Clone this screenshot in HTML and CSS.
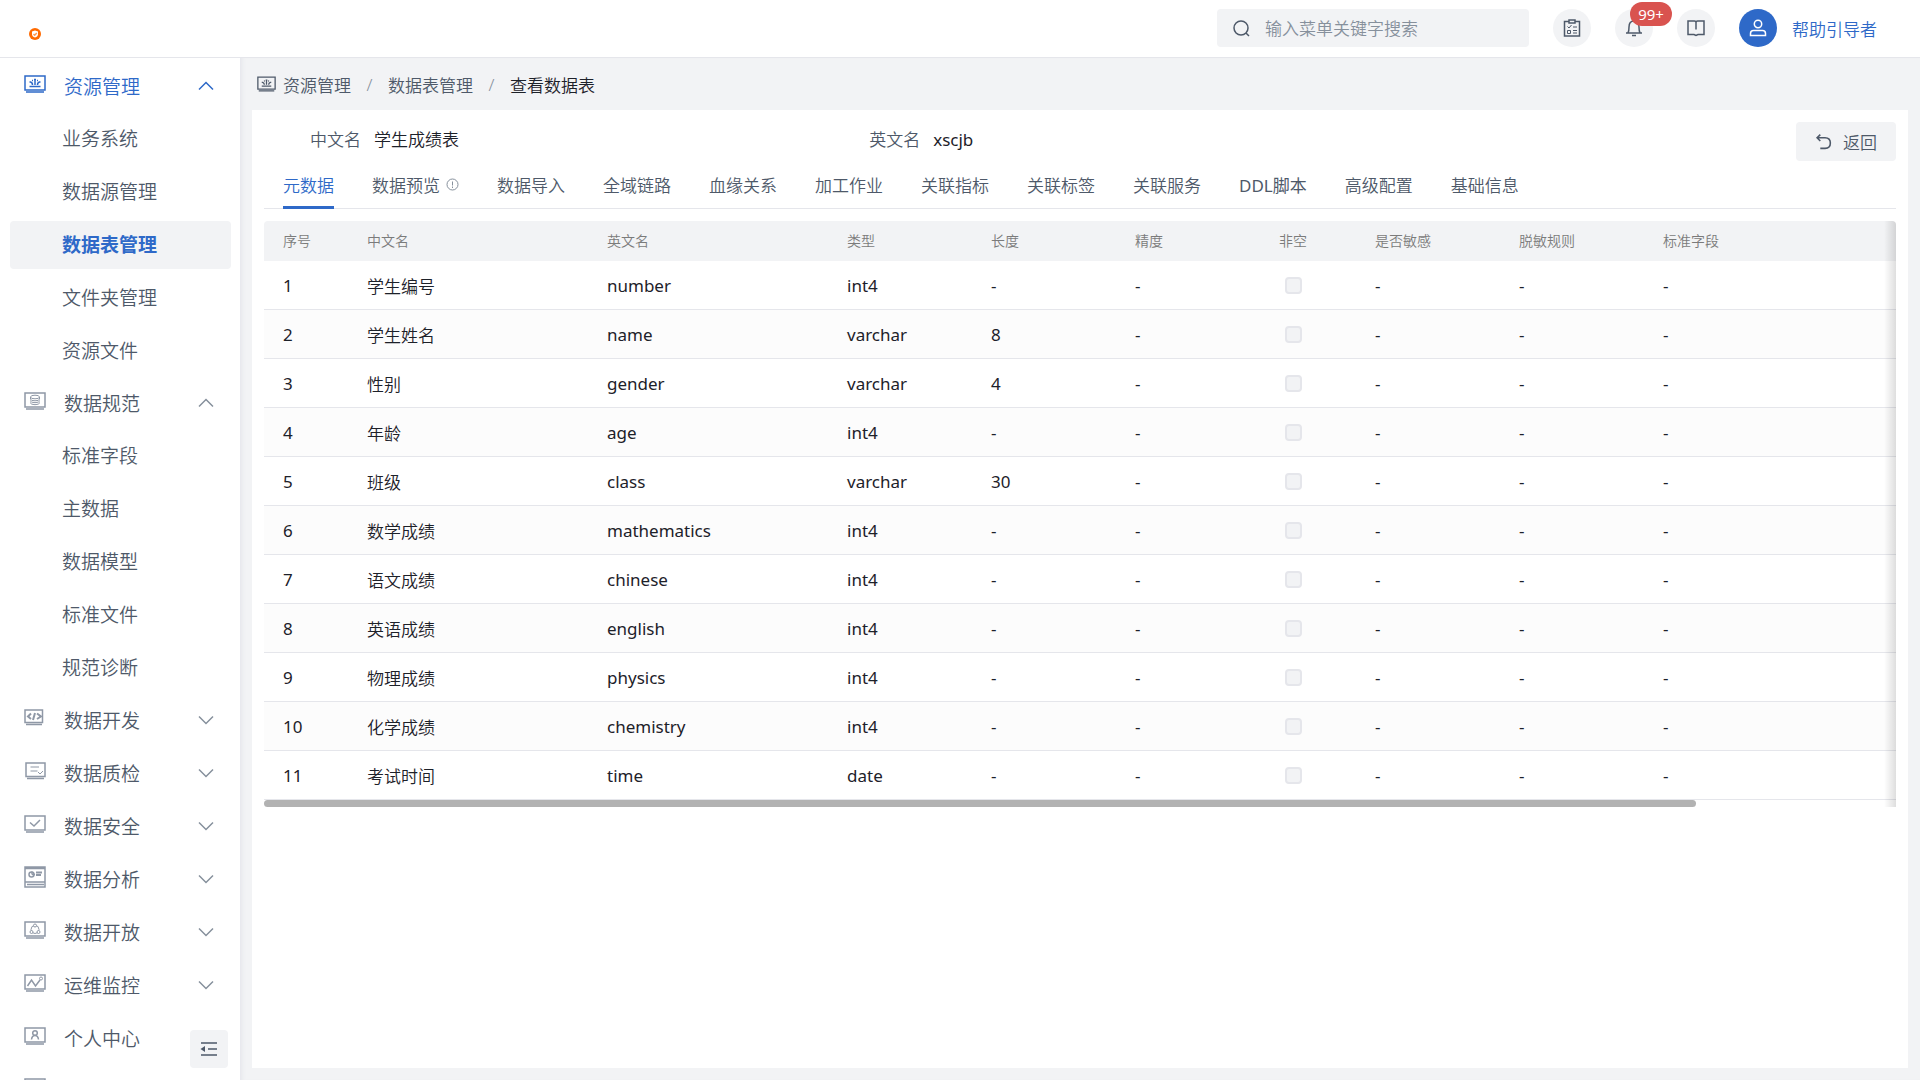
FILE: index.html
```html
<!DOCTYPE html>
<html lang="zh-CN">
<head>
    <meta charset="UTF-8">
    <title>查看数据表</title>
    <link rel="stylesheet" href="styles.css">
</head>
<body>
    <!-- shared icons -->
    <svg class="sprite" aria-hidden="true">
        <symbol id="screen" viewBox="0 0 22 18">
            <path d="M1 1h20v14H1zM2 17h18"/>
        </symbol>
        <symbol id="i-resource" viewBox="0 0 22 18">
            <path d="M1 1h20v14H1zM2 17h18"/>
            <path d="M5.500 11.500h11M11 10V4M8.500 10Q8.500 7.500 6.500 7M13.500 10Q13.500 7.500 15.500 7M10 4.500h2M5.500 7h1.500M15 7h1.500M8 5.500h1M13 5.500h1"/>
        </symbol>
        <symbol id="i-up" viewBox="0 0 16 10"><path d="M1 8.500l7-7 7 7"/></symbol>
        <symbol id="i-down" viewBox="0 0 16 10"><path d="M1 1.500l7 7 7-7"/></symbol>
    </svg>

    <header class="header">
        <svg class="logo" viewBox="0 0 12 12">
            <circle cx="6" cy="6" r="6" fill="#ff6a00"/>
            <path d="M6 2.500l3 1v2.500q0 2.500-3 3.500q-3-1-3-3.500V3.500z" fill="#fff"/>
            <path d="M4.500 6l1.200 1.200L7.800 5" fill="none" stroke="#ff9a50"/>
        </svg>
        <div class="header-right">
            <div class="search">
                <svg class="icon search-icon" viewBox="0 0 17 17"><circle cx="8" cy="8" r="7"/><path d="M13 13l3 3"/></svg>
                <input type="text" placeholder="输入菜单关键字搜索" aria-label="搜索">
            </div>
            <button class="round-btn" aria-label="任务">
                <svg class="icon" viewBox="0 0 18 18"><path d="M6 2.500H1.500v14.500h15V2.500H12M6 1h6v3H6z"/><path class="thin" d="M4.500 7.500l1.500 1.500 2.500-3M10 8h4M10 11.500h4M10 14h4M4.500 11.500h3v3h-3z"/></svg>
            </button>
            <button class="round-btn" aria-label="消息">
                <svg class="icon" viewBox="0 0 18 18"><path d="M1 14h16M3 14Q4 12 4 8q0-6 5-6t5 6q0 4 1 6M9 2V0M7 16.500h4"/></svg>
                <span class="badge">99+</span>
            </button>
            <button class="round-btn" aria-label="文档">
                <svg class="icon" viewBox="0 0 18 18"><path d="M1 2h6.500q1.500 0 1.500 1.500q0-1.500 1.500-1.500H17v13.500h-6l-2 1-2-1H1zM9 3.500v7"/></svg>
            </button>
            <a class="user" href="#">
                <span class="avatar">
                    <svg class="icon" viewBox="0 0 18 18"><circle cx="9" cy="5" r="3.700"/><path d="M1.500 16.500v-2q0-3 3-3h9q3 0 3 3v2z"/></svg>
                </span>
                帮助引导者
            </a>
        </div>
    </header>

    <div class="layout">
        <nav class="sidebar">
            <div class="group open">
                <button class="menu-title active"><svg class="menu-icon"><use href="#i-resource"/></svg>资源管理<svg class="arrow"><use href="#i-up"/></svg></button>
                <a class="menu-item" href="#">业务系统</a>
                <a class="menu-item" href="#">数据源管理</a>
                <a class="menu-item selected" href="#">数据表管理</a>
                <a class="menu-item" href="#">文件夹管理</a>
                <a class="menu-item" href="#">资源文件</a>
            </div>
            <div class="group open">
                <button class="menu-title"><svg class="menu-icon" viewBox="0 0 22 18"><use href="#screen"/><g class="thin"><ellipse cx="11" cy="5" rx="4.500" ry="1.800"/><path d="M6.500 5v2q0 1.800 4.500 1.800t4.500-1.800V5M6 8.500q1 2.200 5 2.200t5-2.200M6 10.500q1 2.200 5 2.200t5-2.200"/></g></svg>数据规范<svg class="arrow"><use href="#i-up"/></svg></button>
                <a class="menu-item" href="#">标准字段</a>
                <a class="menu-item" href="#">主数据</a>
                <a class="menu-item" href="#">数据模型</a>
                <a class="menu-item" href="#">标准文件</a>
                <a class="menu-item" href="#">规范诊断</a>
            </div>
            <div class="group">
                <button class="menu-title"><svg class="menu-icon" viewBox="0 0 22 18"><path d="M1 1h17.500v12.500H1zM2 15.500h16"/><path class="bold" d="M7 4.500L4 7.500l3 2.500M13 4.500l4 3-4 2.500M11 4l-2 7"/></svg>数据开发<svg class="arrow"><use href="#i-down"/></svg></button>
            </div>
            <div class="group">
                <button class="menu-title"><svg class="menu-icon" viewBox="0 0 22 18"><path d="M2 1h19v13.500H2zM3 16.500h17"/><path class="thin" d="M6.500 5H15M6.500 9h7M14 10l2 2 3-3"/></svg>数据质检<svg class="arrow"><use href="#i-down"/></svg></button>
            </div>
            <div class="group">
                <button class="menu-title"><svg class="menu-icon" viewBox="0 0 22 18"><use href="#screen"/><path d="M6 7.500l4 3.500 6-6"/></svg>数据安全<svg class="arrow"><use href="#i-down"/></svg></button>
            </div>
            <div class="group">
                <button class="menu-title"><svg class="menu-icon tall" viewBox="0 0 22 22"><path d="M1 1h20v20H1zM1 16h20M3 18.500h17M1 2.500h20"/><path class="bold" d="M12 6.500h6M12 9h5"/><circle cx="7.500" cy="8.500" r="2.500"/><path d="M8 8.500V5.500M8 8.500h3"/></svg>数据分析<svg class="arrow"><use href="#i-down"/></svg></button>
            </div>
            <div class="group">
                <button class="menu-title"><svg class="menu-icon" viewBox="0 0 22 18"><use href="#screen"/><g class="thin"><circle cx="11" cy="8.500" r="4"/><circle cx="11" cy="4.500" r="1.500" fill="#fff"/><circle cx="7.500" cy="11" r="1.500" fill="#fff"/><circle cx="14.500" cy="11" r="1.500" fill="#fff"/></g></svg>数据开放<svg class="arrow"><use href="#i-down"/></svg></button>
            </div>
            <div class="group">
                <button class="menu-title"><svg class="menu-icon" viewBox="0 0 22 18"><use href="#screen"/><path d="M3.500 12L7.500 6l4 6 4.500-6"/><circle class="thin" cx="17" cy="4.500" r="1.500"/></svg>运维监控<svg class="arrow"><use href="#i-down"/></svg></button>
            </div>
            <div class="group">
                <button class="menu-title"><svg class="menu-icon" viewBox="0 0 22 18"><use href="#screen"/><circle cx="11" cy="6" r="2.300"/><path d="M7.500 12.500q.5-4 3.500-4t3.500 4"/></svg>个人中心</button>
            </div>
            <div class="group">
                <button class="menu-title" aria-label="更多"><svg class="menu-icon tall" viewBox="0 0 22 22"><path d="M1 1h20v14H1z"/></svg></button>
            </div>
            <button class="collapse-btn" aria-label="收起菜单">
                <svg class="icon" viewBox="0 0 18 16"><path d="M1 2h16M8 8h9M1 14h16"/><path d="M5 5v6L.5 8z" fill="currentColor" stroke="none"/></svg>
            </button>
        </nav>

        <main class="main">
            <div class="breadcrumb">
                <svg class="crumb-icon"><use href="#i-resource"/></svg>
                <a href="#">资源管理</a>
                <span class="sep">/</span>
                <a href="#">数据表管理</a>
                <span class="sep">/</span>
                <span class="current">查看数据表</span>
            </div>

            <section class="panel">
                <div class="info">
                    <dl class="fields">
                        <div class="field"><dt>中文名</dt><dd>学生成绩表</dd></div>
                        <div class="field"><dt>英文名</dt><dd class="latin">xscjb</dd></div>
                    </dl>
                    <button class="back-btn">
                        <svg class="icon" viewBox="0 0 17 16"><path d="M5 1L2 4l3 3M2 4h7.500q5 0 5 5t-5 5H5"/></svg>
                        返回
                    </button>
                </div>

                <div class="tabs">
                    <a class="tab active" href="#">元数据</a>
                    <a class="tab" href="#">数据预览<svg class="tip" viewBox="0 0 13 13"><circle cx="6.500" cy="6.500" r="5.500"/><path d="M6.500 3.500v4M6.500 8.500v1.500"/></svg></a>
                    <a class="tab" href="#">数据导入</a>
                    <a class="tab" href="#">全域链路</a>
                    <a class="tab" href="#">血缘关系</a>
                    <a class="tab" href="#">加工作业</a>
                    <a class="tab" href="#">关联指标</a>
                    <a class="tab" href="#">关联标签</a>
                    <a class="tab" href="#">关联服务</a>
                    <a class="tab latin" href="#">DDL脚本</a>
                    <a class="tab" href="#">高级配置</a>
                    <a class="tab" href="#">基础信息</a>
                </div>

                <div class="table-wrap">
                    <table>
                        <colgroup>
                            <col class="w-no"><col class="w-name"><col class="w-name">
                            <col class="w-col"><col class="w-col"><col class="w-col">
                            <col class="w-check"><col class="w-col"><col class="w-col"><col>
                        </colgroup>
                        <thead>
                            <tr><th>序号</th><th>中文名</th><th>英文名</th><th>类型</th><th>长度</th><th>精度</th><th>非空</th><th>是否敏感</th><th>脱敏规则</th><th>标准字段</th></tr>
                        </thead>
                        <tbody>
                            <tr><td>1</td><td class="cn">学生编号</td><td>number</td><td>int4</td><td>-</td><td>-</td><td><input type="checkbox" aria-label="非空" disabled></td><td>-</td><td>-</td><td>-</td></tr>
                            <tr><td>2</td><td class="cn">学生姓名</td><td>name</td><td>varchar</td><td>8</td><td>-</td><td><input type="checkbox" aria-label="非空" disabled></td><td>-</td><td>-</td><td>-</td></tr>
                            <tr><td>3</td><td class="cn">性别</td><td>gender</td><td>varchar</td><td>4</td><td>-</td><td><input type="checkbox" aria-label="非空" disabled></td><td>-</td><td>-</td><td>-</td></tr>
                            <tr><td>4</td><td class="cn">年龄</td><td>age</td><td>int4</td><td>-</td><td>-</td><td><input type="checkbox" aria-label="非空" disabled></td><td>-</td><td>-</td><td>-</td></tr>
                            <tr><td>5</td><td class="cn">班级</td><td>class</td><td>varchar</td><td>30</td><td>-</td><td><input type="checkbox" aria-label="非空" disabled></td><td>-</td><td>-</td><td>-</td></tr>
                            <tr><td>6</td><td class="cn">数学成绩</td><td>mathematics</td><td>int4</td><td>-</td><td>-</td><td><input type="checkbox" aria-label="非空" disabled></td><td>-</td><td>-</td><td>-</td></tr>
                            <tr><td>7</td><td class="cn">语文成绩</td><td>chinese</td><td>int4</td><td>-</td><td>-</td><td><input type="checkbox" aria-label="非空" disabled></td><td>-</td><td>-</td><td>-</td></tr>
                            <tr><td>8</td><td class="cn">英语成绩</td><td>english</td><td>int4</td><td>-</td><td>-</td><td><input type="checkbox" aria-label="非空" disabled></td><td>-</td><td>-</td><td>-</td></tr>
                            <tr><td>9</td><td class="cn">物理成绩</td><td>physics</td><td>int4</td><td>-</td><td>-</td><td><input type="checkbox" aria-label="非空" disabled></td><td>-</td><td>-</td><td>-</td></tr>
                            <tr><td>10</td><td class="cn">化学成绩</td><td>chemistry</td><td>int4</td><td>-</td><td>-</td><td><input type="checkbox" aria-label="非空" disabled></td><td>-</td><td>-</td><td>-</td></tr>
                            <tr><td>11</td><td class="cn">考试时间</td><td>time</td><td>date</td><td>-</td><td>-</td><td><input type="checkbox" aria-label="非空" disabled></td><td>-</td><td>-</td><td>-</td></tr>
                        </tbody>
                    </table>
                    <div class="scrollbar"></div>
                </div>
            </section>
        </main>
    </div>
</body>
</html>
```

FILE: styles.css
```css
* {
    box-sizing: border-box;
}

body {
    margin: 0;
    height: 100vh;
    display: flex;
    flex-direction: column;
    overflow: hidden;
    font-family: "Noto Sans", "Noto Sans CJK SC", sans-serif;
    font-size: 17px;
    font-weight: 350;
    color: #1d2129;
    background: #f2f3f5;
}

a {
    color: inherit;
    text-decoration: none;
}

button,
input {
    font: inherit;
    color: inherit;
    border: none;
    padding: 0;
    margin: 0;
    background: none;
}

button {
    cursor: pointer;
}

svg {
    display: block;
    flex: none;
    fill: none;
    stroke: currentColor;
    stroke-width: 1.5;
}

.latin {
    font-weight: 400;
}

.sprite {
    position: absolute;
    width: 0;
    height: 0;
}

.icon {
    width: 18px;
    height: 18px;
}

/* header */
.header {
    flex: none;
    height: 58px;
    display: flex;
    align-items: center;
    justify-content: space-between;
    padding: 0 43px 1px 29px;
    background: #fff;
    border-bottom: 1px solid #e5e6eb;
}

.logo {
    width: 12px;
    height: 12px;
    margin-top: 12px;
    stroke: none;
}

.header-right {
    display: flex;
    align-items: center;
    gap: 24px;
}

.search {
    width: 312px;
    height: 38px;
    display: flex;
    align-items: center;
    gap: 15px;
    padding: 0 16px;
    border-radius: 4px;
    background: #f2f3f5;
    color: #4e5969;
}

.search-icon {
    width: 17px;
    height: 17px;
}

.search input {
    flex: 1;
    min-width: 0;
    outline: none;
}

.search input::placeholder {
    color: #86909c;
    opacity: 1;
}

.round-btn,
.avatar {
    position: relative;
    width: 38px;
    height: 38px;
    display: flex;
    align-items: center;
    justify-content: center;
    border-radius: 50%;
    background: #f2f3f5;
    color: #4e5969;
}

.badge {
    position: absolute;
    top: -7px;
    left: 15px;
    width: 42px;
    height: 24px;
    line-height: 24px;
    border-radius: 12px;
    background: #d9534f;
    color: #fff;
    font-size: 15px;
    font-weight: 400;
    text-align: center;
}

.user {
    display: flex;
    align-items: center;
    gap: 15px;
    color: #2e69c8;
}

.avatar {
    background: #2e69c8;
    color: #fff;
}

/* sidebar */
.layout {
    flex: 1;
    min-height: 0;
    display: flex;
}

.sidebar {
    position: relative;
    flex: none;
    width: 240px;
    padding: 4px 9px 0 10px;
    overflow: hidden;
    background: #fff;
    color: #4e5969;
    font-size: 19px;
}

.group {
    display: flex;
    flex-direction: column;
    gap: 5px;
    margin-bottom: 5px;
}

.group.open {
    margin-bottom: 4px;
}

.menu-title {
    width: 100%;
    height: 48px;
    display: flex;
    align-items: center;
    padding: 0 17px 0 14px;
    text-align: left;
}

.menu-title.active {
    color: #2e69c8;
}

.menu-icon {
    width: 22px;
    height: 18px;
    margin: 0 18px 4px 0;
    color: #8f98a6;
}

.menu-icon.tall {
    height: 22px;
}

.thin {
    stroke-width: 1;
}

.bold {
    stroke-width: 2;
}

.arrow {
    width: 16px;
    height: 10px;
    margin-left: auto;
    color: #86909c;
}

.active .menu-icon,
.active .arrow {
    color: #2e69c8;
}

.menu-item {
    height: 48px;
    line-height: 48px;
    padding-left: 52px;
    border-radius: 4px;
}

.menu-item.selected {
    background: #f2f3f5;
    color: #2e69c8;
    font-weight: 700;
}

.collapse-btn {
    position: absolute;
    right: 12px;
    bottom: 12px;
    width: 38px;
    height: 38px;
    display: flex;
    align-items: center;
    justify-content: center;
    border-radius: 4px;
    background: #f2f3f5;
}

/* content */
.main {
    flex: 1;
    min-width: 0;
    display: flex;
    flex-direction: column;
    padding: 0 12px 12px;
    box-shadow: inset 5px 0 4px -3px #e5e6eb;
}

.breadcrumb {
    height: 52px;
    display: flex;
    align-items: center;
    padding: 0 5px;
    color: #4e5969;
}

.crumb-icon {
    width: 19px;
    height: 16px;
    margin-right: 7px;
}

.sep {
    width: 37px;
    text-align: center;
    color: #86909c;
}

.current {
    color: #1d2129;
}

.panel {
    flex: 1;
    padding: 12px;
    background: #fff;
}

.info {
    display: flex;
    height: 39px;
}

.fields {
    flex: 1;
    display: flex;
    margin: 0;
    line-height: 36px;
}

.field {
    width: 36.5%;
    display: flex;
    gap: 13px;
}

.field dt {
    width: 97px;
    text-align: right;
    color: #4e5969;
}

.field dd {
    margin: 0;
}

.back-btn {
    width: 100px;
    display: flex;
    align-items: center;
    justify-content: center;
    gap: 10px;
    border-radius: 4px;
    background: #f2f3f5;
    color: #4e5969;
}

.tabs {
    display: flex;
    gap: 38px;
    height: 48px;
    padding: 0 19px;
    border-bottom: 1px solid #e5e6eb;
    color: #4e5969;
}

.tab {
    display: flex;
    align-items: center;
    gap: 6px;
    height: 48px;
    border-top: 1px solid transparent;
    border-bottom: 3px solid transparent;
    white-space: nowrap;
}

.tab.active {
    color: #2e69c8;
    border-bottom-color: #2e69c8;
}

.tip {
    width: 13px;
    height: 13px;
    color: #86909c;
    stroke-width: 1;
}

.table-wrap {
    position: relative;
    margin-top: 12px;
    overflow: hidden;
    border-radius: 4px 4px 0 0;
}

.table-wrap::after {
    content: "";
    position: absolute;
    top: 0;
    right: 0;
    bottom: 0;
    width: 12px;
    background: linear-gradient(to left, rgba(0, 0, 0, 0.13), transparent);
}

table {
    width: 114%;
    table-layout: fixed;
    border-collapse: separate;
    border-spacing: 0;
}

.w-no {
    width: 84px;
}

.w-name {
    width: 240px;
}

.w-col {
    width: 144px;
}

.w-check {
    width: 96px;
}

th,
td {
    padding: 0 19px;
    text-align: left;
    white-space: nowrap;
}

th {
    height: 40px;
    padding-bottom: 2px;
    background: #f2f3f5;
    color: #7b7b7b;
    font-size: 14px;
    font-weight: 350;
}

td {
    height: 49px;
    border-bottom: 1px solid #e5e6eb;
    font-weight: 400;
}

td.cn {
    font-weight: 350;
}

tbody tr:nth-child(even) {
    background: #fcfcfc;
}

td input {
    appearance: none;
    display: block;
    width: 17px;
    height: 17px;
    margin-left: 6px;
    border: 2px solid #e5e6eb;
    border-radius: 4px;
    background: #f2f3f5;
}

.scrollbar {
    width: 87.75%;
    height: 7px;
    border-radius: 4px;
    background: #b2b2b2;
}
```
